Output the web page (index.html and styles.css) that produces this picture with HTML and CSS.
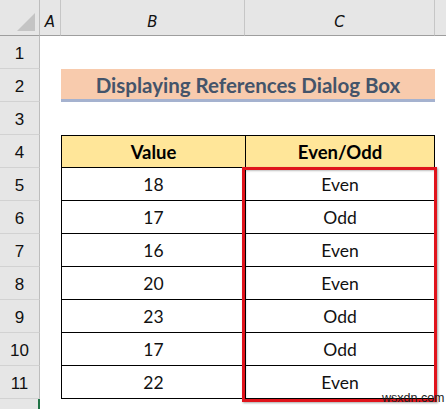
FILE: index.html
```html
<!DOCTYPE html>
<html>
<head>
<meta charset="utf-8">
<link rel="stylesheet" href="styles.css">
</head>
<body>
<div class="sheet">
  <div class="corner"><span class="tri"></span></div>
  <div class="colhead">A</div>
  <div class="colhead">B</div>
  <div class="colhead">C</div>
  <div class="colhead last"></div>

  <div class="rowhead">1</div><div class="cell span4"></div>
  <div class="rowhead">2</div><div class="cell"></div><div class="title">Displaying References Dialog Box</div><div class="cell"></div>
  <div class="rowhead">3</div><div class="cell span4"></div>
  <div class="rowhead">4</div><div class="cell"></div><div class="th">Value</div><div class="th right">Even/Odd</div><div class="cell"></div>
  <div class="rowhead">5</div><div class="cell"></div><div class="td">18</div><div class="td right">Even</div><div class="cell"></div>
  <div class="rowhead">6</div><div class="cell"></div><div class="td">17</div><div class="td right">Odd</div><div class="cell"></div>
  <div class="rowhead">7</div><div class="cell"></div><div class="td">16</div><div class="td right">Even</div><div class="cell"></div>
  <div class="rowhead">8</div><div class="cell"></div><div class="td">20</div><div class="td right">Even</div><div class="cell"></div>
  <div class="rowhead">9</div><div class="cell"></div><div class="td">23</div><div class="td right">Odd</div><div class="cell"></div>
  <div class="rowhead">10</div><div class="cell"></div><div class="td">17</div><div class="td right">Odd</div><div class="cell"></div>
  <div class="rowhead">11</div><div class="cell"></div><div class="td">22</div><div class="td right">Even</div><div class="cell"></div>
  <div class="rowhead sel"></div><div class="cell span4"></div>

  <div class="redbox"></div>
  <div class="watermark">wsxdn.com</div>
</div>
</body>
</html>
```

FILE: styles.css
```css
html, body {
  margin: 0;
  padding: 0;
  background: #ffffff;
  overflow: hidden;
}

.sheet {
  position: relative;
  width: 446px;
  height: 409px;
  display: grid;
  grid-template-columns: 40px 21px 184px 190px 11px;
  grid-template-rows: 36px repeat(11, 33px) 10px;
  font-family: Lato, "Open Sans", sans-serif;
  background: #ffffff;
}

.corner {
  position: relative;
  background: #e6e6e6;
  border-right: 1px solid #bdbdbd;
  border-bottom: 1px solid #9e9e9e;
  box-sizing: border-box;
}

.tri {
  position: absolute;
  right: 4px;
  bottom: 4px;
  width: 0;
  height: 0;
  border-left: 18px solid transparent;
  border-bottom: 18px solid #c4c4c4;
}

.colhead {
  background: #e6e6e6;
  border-right: 1px solid #c6c6c6;
  border-bottom: 1px solid #9e9e9e;
  box-sizing: border-box;
  display: flex;
  align-items: center;
  justify-content: center;
  padding-top: 8px;
  font-family: "DejaVu Sans", sans-serif;
  font-style: italic;
  font-size: 15px;
  color: #111;
}

.colhead.last {
  border-right: none;
}

.rowhead {
  background: #e6e6e6;
  border-right: 1px solid #bdbdbd;
  border-bottom: 1px solid #d2d2d2;
  box-sizing: border-box;
  display: flex;
  align-items: center;
  justify-content: center;
  padding-top: 3px;
  font-family: "Liberation Sans", sans-serif;
  font-size: 17px;
  color: #111;
}

.rowhead.sel {
  border-right: 2px solid #217346;
  border-bottom: none;
}

.cell {
  background: #ffffff;
}

.span4 {
  grid-column: span 4;
}

.title {
  grid-column: span 2;
  background: #f8cbad;
  border-bottom: 3px solid #a5b2cf;
  box-sizing: border-box;
  display: flex;
  align-items: center;
  justify-content: center;
  padding-top: 2px;
  font-weight: 700;
  font-size: 20.5px;
  color: #44546a;
}

.th, .td {
  border-left: 1px solid #000;
  border-bottom: 1px solid #000;
  box-sizing: border-box;
  display: flex;
  align-items: center;
  justify-content: center;
  color: #000;
}

.th.right, .td.right {
  border-right: 1px solid #000;
}

.th {
  background: #ffe699;
  border-top: 1px solid #000;
  font-weight: 700;
  font-size: 18.5px;
  padding-top: 1px;
}

.td {
  font-size: 17.5px;
  color: #111;
}

.redbox {
  position: absolute;
  left: 242px;
  top: 167px;
  width: 189px;
  height: 229px;
  border: 3px solid #e0141c;
  box-shadow: 1px 1px 2px rgba(0, 0, 0, 0.35), inset 1px 1px 2px rgba(0, 0, 0, 0.25);
}

.watermark {
  position: absolute;
  left: 382px;
  top: 391px;
  font-family: "Liberation Sans", sans-serif;
  font-size: 12.5px;
  line-height: 15px;
  color: #222;
}
```
